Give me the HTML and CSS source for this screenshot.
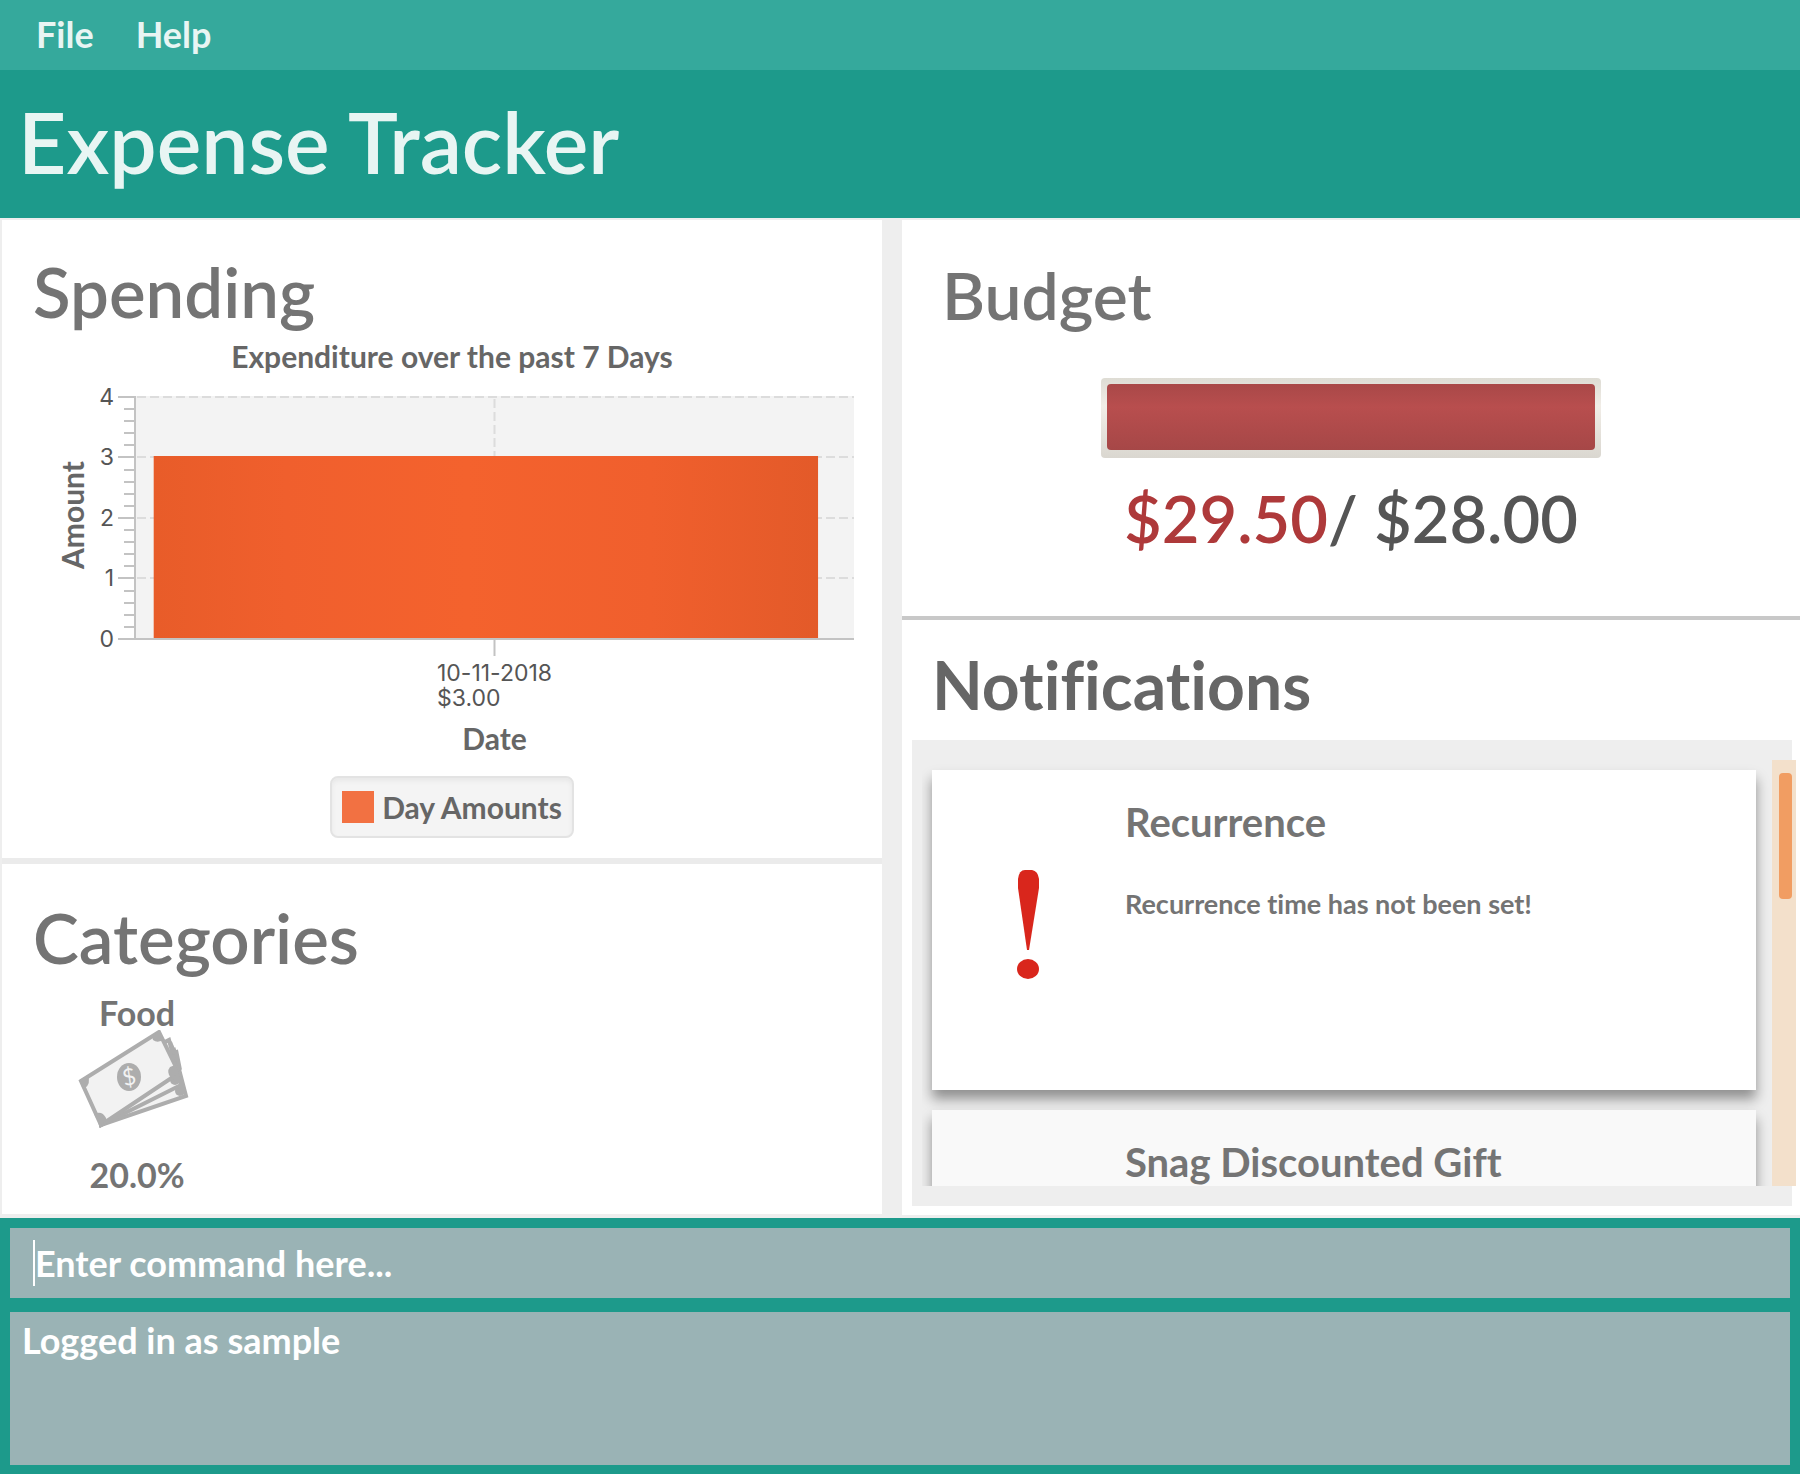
FILE: index.html
```html
<!DOCTYPE html>
<html lang="en">
<head>
<meta charset="utf-8">
<title>Expense Tracker</title>
<link rel="stylesheet" href="styles.css">
</head>
<body>
<nav class="menu">
  <button type="button">File</button>
  <button type="button">Help</button>
</nav>
<header class="titlebar"><h1>Expense Tracker</h1></header>

<main class="board">
  <div class="column">
    <section class="panel spending">
      <h2>Spending</h2>
      <h3 class="chart-title">Expenditure over the past 7 Days</h3>
      <div class="chart">
        <svg class="y-axis" aria-hidden="true">
          <text class="axis-title" transform="translate(82 119) rotate(-90)" text-anchor="middle">Amount</text>
          <g class="tick-label" text-anchor="end">
            <text x="112" y="9">4</text>
            <text x="112" y="69">3</text>
            <text x="112" y="130">2</text>
            <text x="112" y="190">1</text>
            <text x="112" y="251">0</text>
          </g>
          <path class="axis-line" d="M133 0V243M116 1H133M116 61H133M116 122H133M116 182H133M116 243H133"/>
          <path class="axis-line" d="M122 13H133M122 25H133M122 37H133M122 49H133M122 74H133M122 86H133M122 98H133M122 110H133M122 134H133M122 146H133M122 158H133M122 170H133M122 195H133M122 207H133M122 219H133M122 231H133"/>
        </svg>
        <svg class="plot" role="img" aria-label="Day amounts: $3.00 on 10-11-2018">
          <defs>
            <linearGradient id="bar">
              <stop offset="0" stop-color="#e85c29"/>
              <stop offset="0.2" stop-color="#f05f2d"/>
              <stop offset="0.47" stop-color="#f4622d"/>
              <stop offset="0.75" stop-color="#f05f2d"/>
              <stop offset="1" stop-color="#e35a29"/>
            </linearGradient>
          </defs>
          <rect class="plot-bg" width="100%" height="243"/>
          <g class="grid-line">
            <line x1="2" y1="1" x2="100%" y2="1"/>
            <line x1="2" y1="61" x2="100%" y2="61"/>
            <line x1="2" y1="122" x2="100%" y2="122"/>
            <line x1="2" y1="182" x2="100%" y2="182"/>
            <line x1="50%" y1="3" x2="50%" y2="242"/>
          </g>
          <rect x="2.6%" y="60" width="92.4%" height="183" fill="url(#bar)"/>
          <path class="axis-line" d="M0 0V243"/>
          <line class="axis-line" x1="0" y1="243" x2="100%" y2="243"/>
          <line class="axis-line" x1="50%" y1="243" x2="50%" y2="260"/>
        </svg>
        <div class="x-axis">
          <p class="tick-label">10-11-2018<br>$3.00</p>
          <p class="axis-title">Date</p>
        </div>
      </div>
      <div class="legend-row">
        <div class="legend"><span class="swatch"></span>Day Amounts</div>
      </div>
    </section>

    <section class="panel categories">
      <h2>Categories</h2>
      <div class="category">
        <p class="category-name">Food</p>
        <svg class="cash" viewBox="0 0 118 100" aria-hidden="true">
          <g class="bill">
            <path d="M20 50L96 20L108 66L23 95Z"/>
            <circle cx="102" cy="61" r="5"/>
            <path d="M12 50L91 10L103 55L23 95Z"/>
            <circle cx="97" cy="50" r="5"/>
            <path d="M92 12L97 24M98 20L102 40"/>
            <path d="M3 51L81 2L101 43L23 95Z"/>
            <g class="corner">
              <path d="M2 50L10 45Q13 54 7 58Q5 59 4 57Z"/>
              <path d="M74 6L81 2L86 9Q80 14 75 10Z"/>
              <path d="M97 35L101 43L93 48Q88 42 92 37Z"/>
              <path d="M16 84Q24 80 28 88L29 91L22 95Z"/>
            </g>
          </g>
          <ellipse class="coin" cx="51" cy="47" rx="12" ry="14"/>
          <text class="coin-sign" transform="translate(51 47) rotate(-12)" y="8" text-anchor="middle">$</text>
        </svg>
        <p class="category-share">20.0%</p>
      </div>
    </section>
  </div>

  <div class="column">
    <section class="panel budget">
      <h2>Budget</h2>
      <progress max="28" value="28" aria-label="Budget used"></progress>
      <p class="amount"><span class="over">$29.50</span>/ $28.00</p>
    </section>

    <section class="panel notifications">
      <h2>Notifications</h2>
      <div class="list">
        <div class="viewport">
          <article class="card">
            <svg class="alert" viewBox="0 0 24 110" aria-hidden="true">
              <path d="M2 9Q3 0 9 0H16Q22 1 23 9V18L13 80H11L2 18Z"/>
              <ellipse cx="12" cy="99" rx="11" ry="10"/>
            </svg>
            <div class="card-text">
              <h3>Recurrence</h3>
              <p>Recurrence time has not been set!</p>
            </div>
          </article>
          <article class="card alt">
            <div class="card-text">
              <h3>Snag Discounted Gift</h3>
            </div>
          </article>
        </div>
        <div class="scrollbar"><div class="thumb"></div></div>
      </div>
    </section>
  </div>
</main>

<footer class="console">
  <div class="command">
    <span class="caret"></span>
    <input type="text" placeholder="Enter command here..." aria-label="Command">
  </div>
  <textarea class="output" readonly aria-label="Result">Logged in as sample</textarea>
</footer>
</body>
</html>
```

FILE: styles.css
```css
* {
  box-sizing: border-box;
}

body {
  margin: 0;
  min-height: 100vh;
  display: flex;
  flex-direction: column;
  background: #eeeeee;
  color: #747474;
  font-family: Lato, "Open Sans", sans-serif;
  font-weight: 700;
  font-variant-ligatures: none;
}

h1, h2, h3, p {
  margin: 0;
  font-weight: inherit;
}

.menu {
  display: flex;
  height: 70px;
  padding-left: 15px;
  background: #35a99c;
}

.menu button {
  padding: 0 21px 2px;
  border: 0;
  background: none;
  color: #e8f5f3;
  font: inherit;
  font-size: 36px;
}

.titlebar {
  display: flex;
  align-items: center;
  height: 148px;
  padding: 0 18px 4px;
  background: #1d9a8b;
  color: #e8f5f3;
}

h1 {
  font-size: 84px;
  font-weight: 600;
  line-height: 100px;
}

h2 {
  font-size: 69px;
  font-weight: 600;
  line-height: 80px;
}

.board {
  flex: 1;
  display: grid;
  grid-template-columns: 880fr 898fr;
  gap: 20px;
  padding: 2px 0 3px 2px;
}

.column {
  display: flex;
  flex-direction: column;
  min-width: 0;
}

.panel {
  background: #ffffff;
}

.spending {
  padding: 32px 28px 20px 0;
  border-bottom: 6px solid #ebebeb;
}

.spending h2,
.categories h2 {
  padding-left: 31px;
}

.chart-title {
  margin-top: 4px;
  padding-left: 48px;
  color: #666666;
  font-size: 30px;
  line-height: 40px;
  text-align: center;
}

.chart {
  display: grid;
  grid-template-columns: 133px 1fr;
  margin-top: 20px;
  color: #666666;
}

.y-axis,
.plot {
  display: block;
  width: 100%;
  height: 244px;
  overflow: visible;
}

.axis-title {
  fill: #666666;
  font-size: 30px;
  line-height: 40px;
}

.tick-label {
  fill: #555555;
  color: #555555;
  font-family: Inter, sans-serif;
  font-size: 23px;
  font-weight: 400;
  line-height: 25px;
}

.axis-line {
  fill: none;
  stroke: #c3c3c3;
  stroke-width: 2;
}

.plot-bg {
  fill: #f3f3f3;
}

.grid-line {
  stroke: #dcdcdc;
  stroke-width: 2;
  stroke-dasharray: 9 4;
}

.x-axis {
  grid-column: 2;
  display: flex;
  flex-direction: column;
  align-items: center;
  gap: 7px;
  padding-top: 21px;
}

.legend-row {
  display: flex;
  justify-content: center;
  margin-top: 18px;
  padding-left: 48px;
}

.legend {
  display: flex;
  align-items: center;
  gap: 8px;
  height: 62px;
  padding: 0 10px;
  border: 2px solid #e3e3e3;
  border-radius: 8px;
  background: #f4f4f4;
  box-shadow: inset 0 3px 4px #e8e8e8;
  color: #666666;
  font-size: 30px;
}

.swatch {
  width: 32px;
  height: 32px;
  background: #f27142;
}

.categories {
  flex: 1;
  margin-bottom: 1px;
  padding: 34px 0 19px;
}

.category {
  display: flex;
  flex-direction: column;
  align-items: center;
  width: 118px;
  margin: 18px 0 0 76px;
  font-size: 34px;
  line-height: 34px;
}

.cash {
  width: 118px;
  height: 100px;
}

.bill {
  fill: #f2f2f2;
  stroke: #adadad;
  stroke-width: 4;
}

.bill circle,
.corner {
  fill: #adadad;
  stroke: none;
}

.coin {
  fill: #adadad;
}

.coin-sign {
  fill: #f2f2f2;
  font-size: 23px;
  font-weight: 400;
}

.category-share {
  padding-top: 28px;
}

.budget {
  display: flex;
  flex-direction: column;
  height: 400px;
  padding-top: 35px;
  border-bottom: 4px solid #c8c8c8;
}

.budget h2 {
  padding-left: 40px;
  font-size: 66px;
}

progress {
  appearance: none;
  align-self: center;
  width: 500px;
  height: 80px;
  margin-top: 43px;
  padding: 6px 6px 8px;
  border: 0;
  border-radius: 4px;
  background: linear-gradient(#dedcd4, #f1ede7 35%, #dad7d0);
}

progress::-webkit-progress-bar {
  background: none;
}

progress::-webkit-progress-value {
  border-radius: 4px;
  background: linear-gradient(#a94848, #b84e4e 35%, #a64747);
}

.amount {
  margin-top: 20px;
  color: #555555;
  font-size: 65px;
  font-weight: 600;
  line-height: 80px;
  text-align: center;
}

.over {
  color: #ae393a;
}

.notifications {
  flex: 1;
  padding: 25px 8px 9px 10px;
}

.notifications h2 {
  padding-left: 20px;
  color: #666666;
  font-size: 66px;
  font-weight: 700;
}

.list {
  display: flex;
  height: 466px;
  margin-top: 15px;
  padding: 20px 0 20px 10px;
  background: #eeeeee;
}

.viewport {
  flex: 1;
  display: flex;
  flex-direction: column;
  gap: 20px;
  padding: 10px 16px 0 10px;
  overflow: hidden;
}

.card {
  flex: none;
  display: flex;
  height: 320px;
  background: #ffffff;
  box-shadow: 0 9px 12px rgba(0, 0, 0, 0.4);
}

.card.alt {
  background: #f9f9f9;
  padding-left: 193px;
}

.alert {
  width: 24px;
  height: 110px;
  margin: 100px 85px 0 84px;
  fill: #d9261c;
}

.card-text {
  padding-top: 27px;
}

.card h3 {
  font-size: 40px;
  line-height: 50px;
}

.card p {
  margin-top: 39px;
  font-size: 27px;
  line-height: 36px;
}

.scrollbar {
  flex: none;
  width: 24px;
  margin-right: -4px;
  padding: 13px 4px 0 7px;
  background: #f3e0cb;
}

.thumb {
  height: 126px;
  border-radius: 4px;
  background: #f19d62;
}

.console {
  display: flex;
  flex-direction: column;
  gap: 14px;
  padding: 10px 10px 9px;
  background: #1d9a8b;
}

.command {
  display: flex;
  align-items: center;
  height: 70px;
  padding-left: 23px;
  background: #9ab3b5;
}

.caret {
  width: 2px;
  height: 46px;
  background: #ffffff;
}

.command input {
  flex: 1;
  height: 100%;
  padding: 0;
  border: 0;
  outline: 0;
  background: none;
  color: #ffffff;
  font: inherit;
  font-size: 36px;
}

.command input::placeholder {
  color: #ffffff;
}

.output {
  display: block;
  height: 153px;
  padding: 6px 12px;
  border: 0;
  outline: 0;
  resize: none;
  background: #9ab3b5;
  color: #ffffff;
  font: inherit;
  font-size: 36px;
  line-height: 44px;
}
```
